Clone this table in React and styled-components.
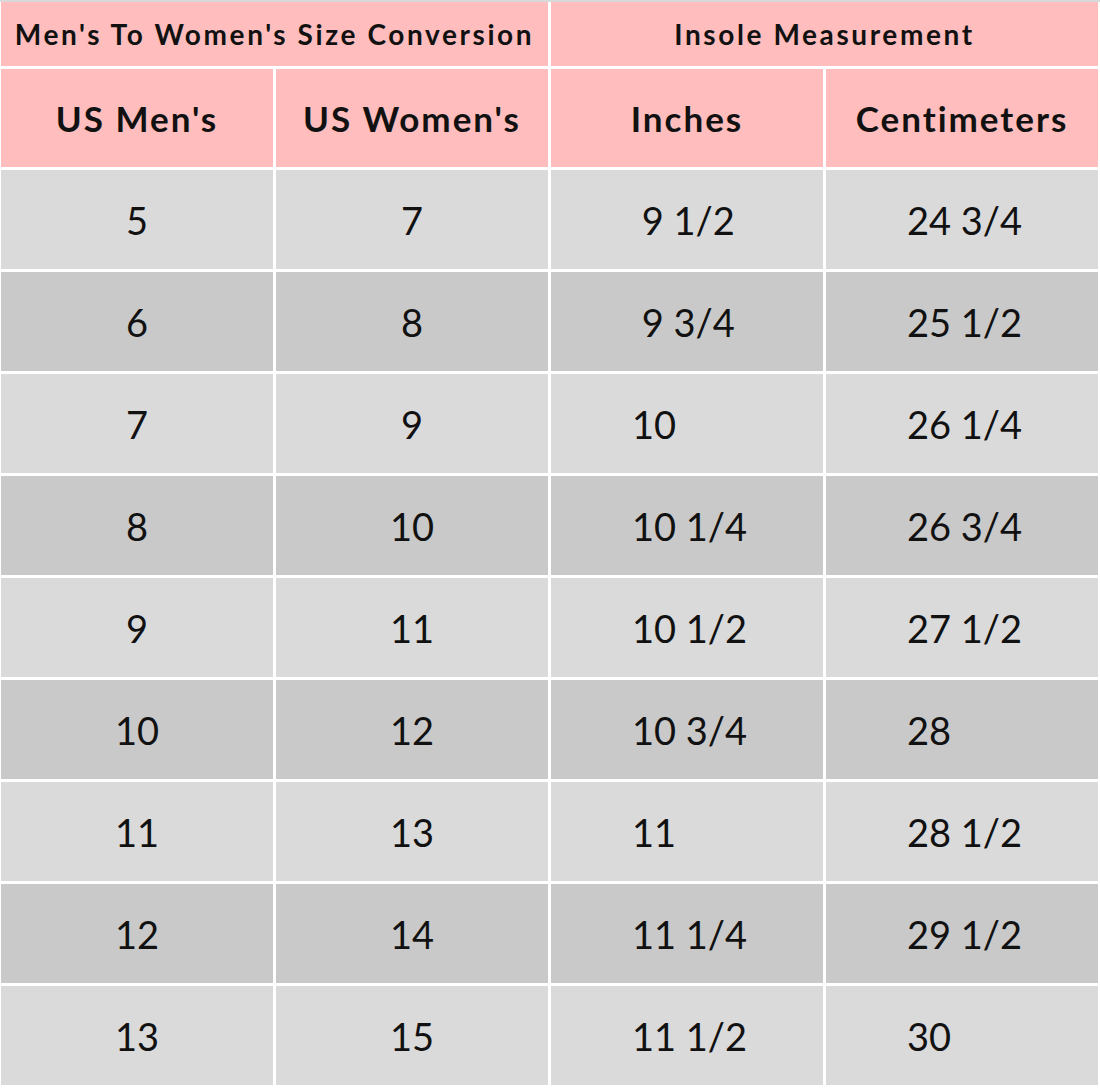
import React from 'react'
import styled, { createGlobalStyle } from 'styled-components'

const GlobalStyle = createGlobalStyle`
  html, body {
    margin: 0;
    padding: 0;
    background: #ffffff;
  }
  body {
    font-family: Lato, "Open Sans", "Liberation Sans", sans-serif;
    color: #111111;
  }
`

const Sheet = styled.div`
  width: 1100px;
  height: 1088px;
  box-sizing: border-box;
  display: grid;
  grid-template-columns: repeat(4, 272px);
  grid-template-rows: 64px 98px repeat(9, 99px);
  gap: 3px;
  padding: 0 2px 3px 1px;
  border-top: 2px solid #d9d9d9;
  background: #ffffff;
`

const GroupHead = styled.div`
  grid-column: span 2;
  background: #ffbdbd;
  display: flex;
  align-items: center;
  justify-content: center;
  font-weight: 700;
  font-size: 28px;
  letter-spacing: 2.6px;
  white-space: nowrap;
`

const ColHead = styled.div`
  background: #ffbdbd;
  display: flex;
  align-items: center;
  justify-content: center;
  font-weight: 700;
  font-size: 35px;
  letter-spacing: 2px;
  white-space: nowrap;
`

const Cell = styled.div`
  background: ${p => (p.$dark ? '#c9c9c9' : '#dadada')};
  display: flex;
  align-items: center;
  justify-content: ${p => (p.$left ? 'flex-start' : 'center')};
  padding-left: ${p => (p.$left ? '81px' : '0')};
  font-size: 38px;
  white-space: pre;
`

const rows = [
  ['5', '7', ' 9 1/2', '24 3/4'],
  ['6', '8', ' 9 3/4', '25 1/2'],
  ['7', '9', '10', '26 1/4'],
  ['8', '10', '10 1/4', '26 3/4'],
  ['9', '11', '10 1/2', '27 1/2'],
  ['10', '12', '10 3/4', '28'],
  ['11', '13', '11', '28 1/2'],
  ['12', '14', '11 1/4', '29 1/2'],
  ['13', '15', '11 1/2', '30'],
]

export default function App() {
  return (
    <>
      <GlobalStyle />
      <Sheet>
        <GroupHead>Men's To Women's Size Conversion</GroupHead>
        <GroupHead>Insole Measurement</GroupHead>
        <ColHead>US Men's</ColHead>
        <ColHead>US Women's</ColHead>
        <ColHead>Inches</ColHead>
        <ColHead>Centimeters</ColHead>
        {rows.map((r, i) => (
          <React.Fragment key={i}>
            <Cell $dark={i % 2 === 1}>{r[0]}</Cell>
            <Cell $dark={i % 2 === 1}>{r[1]}</Cell>
            <Cell $dark={i % 2 === 1} $left>{r[2]}</Cell>
            <Cell $dark={i % 2 === 1} $left>{r[3]}</Cell>
          </React.Fragment>
        ))}
      </Sheet>
    </>
  )
}
